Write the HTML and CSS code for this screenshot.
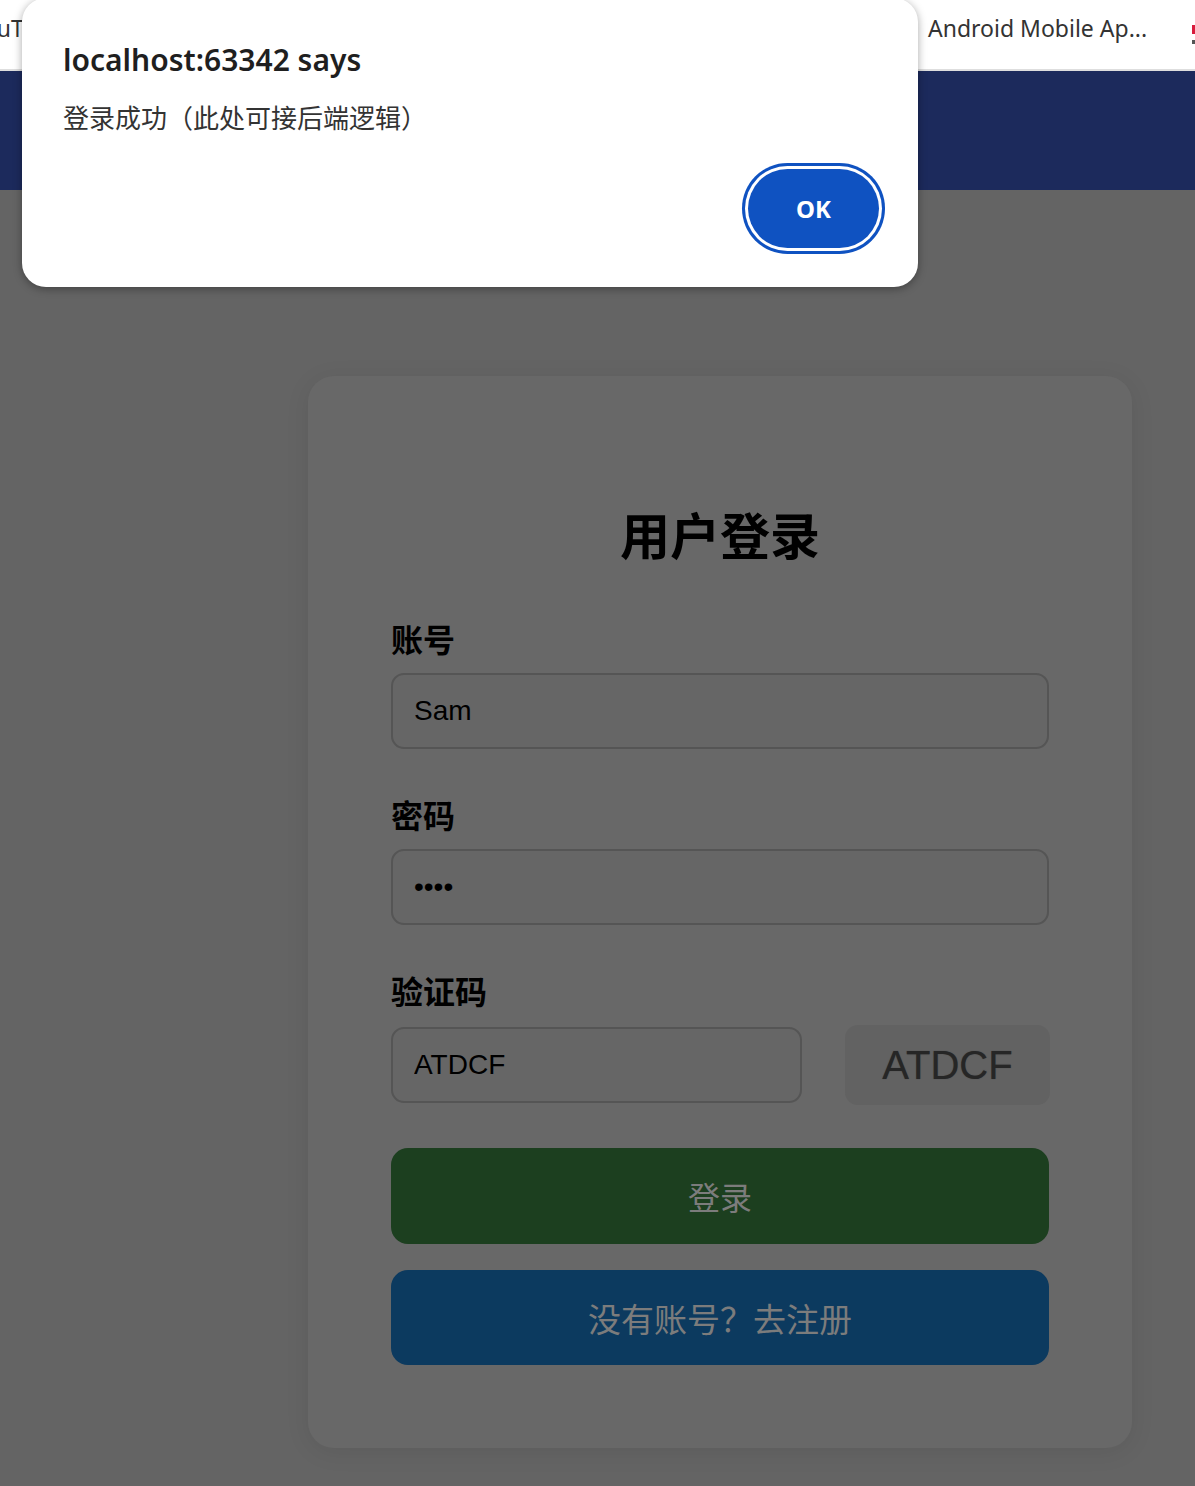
FILE: index.html
```html
<!DOCTYPE html>
<html lang="zh-CN">
<head>
<meta charset="utf-8">
<title>用户登录</title>
<link rel="stylesheet" href="styles.css">
</head>
<body>
<div class="bookmarks">
  <span class="bm bm-first"><span class="bm-first-text">YouTube</span></span>
  <span class="bm bm-android">Android Mobile Ap...</span>
  <span class="bm-fav"><span class="fav-red"></span><span class="fav-dark"></span></span>
</div>
<header class="topband"></header>
<main class="page">
  <form class="card">
    <h1 class="title">用户登录</h1>
    <div class="field">
      <label class="label">账号</label>
      <input class="input" type="text" value="Sam">
    </div>
    <div class="field">
      <label class="label">密码</label>
      <input class="input" type="password" value="1234">
    </div>
    <div class="field field-last">
      <label class="label">验证码</label>
      <div class="captcha-row">
        <input class="input captcha-input" type="text" value="ATDCF">
        <div class="captcha-box">ATDCF</div>
      </div>
    </div>
    <button type="button" class="btn btn-login">登录</button>
    <button type="button" class="btn btn-register">没有账号？去注册</button>
  </form>
</main>
<div class="dialog">
  <div class="dialog-title">localhost:63342 says</div>
  <div class="dialog-msg">登录成功（此处可接后端逻辑）</div>
  <div class="dialog-actions">
    <button type="button" class="ok">OK</button>
  </div>
</div>
</body>
</html>
```
FILE: styles.css
```css
* { box-sizing: border-box; }
html, body { margin: 0; padding: 0; }
body {
  background: #646464;
  font-family: "Liberation Sans", "Noto Sans CJK SC", sans-serif;
  width: 1195px;
  height: 1486px;
  overflow: hidden;
  position: relative;
}

/* bookmark bar */
.bookmarks {
  height: 71px;
  background: #ffffff;
  border-bottom: 2px solid #dedede;
  display: flex;
  align-items: flex-start;
  padding-top: 12px;
  font-family: "Noto Sans", "Open Sans", sans-serif;
  font-size: 23px;
  color: #333333;
  white-space: nowrap;
}
.bm-first {
  flex: 0 0 22px;
  overflow: hidden;
}
.bm-first-text { display: inline-block; margin-left: -29px; }
.bm-android { margin-left: 906px; }
.bm-fav {
  margin-left: auto;
  margin-right: 0;
  display: flex;
  flex-direction: column;
  gap: 6px;
  padding-top: 13px;
}
.fav-red { width: 3px; height: 9px; background: #d81b3c; display: block; }
.fav-dark { width: 3px; height: 4px; background: #555; display: block; }

.topband {
  height: 119px;
  background: #1c2a5c;
}

.page {
  padding: 186px 0 0 308px;
}

.card {
  width: 824px;
  background: #686868;
  border-radius: 26px;
  padding: 127px 83px 83px;
  box-shadow: 0 4px 24px rgba(0, 0, 0, 0.08);
  display: flex;
  flex-direction: column;
}

.title {
  margin: 0 0 55px;
  font-family: "Noto Sans CJK SC", sans-serif;
  font-size: 50px;
  line-height: 60px;
  font-weight: 700;
  text-align: center;
  color: #000;
}

.field { display: flex; flex-direction: column; margin-bottom: 45px; }
.field-last { margin-bottom: 43px; }

.label {
  font-family: "Noto Sans CJK SC", sans-serif;
  font-size: 32px;
  line-height: 40px;
  font-weight: 700;
  color: #000;
  margin-bottom: 15px;
}

.input {
  height: 76px;
  width: 100%;
  border: 2px solid #555555;
  border-radius: 13px;
  background: #666666;
  padding: 0 21px;
  font-family: "Liberation Sans", sans-serif;
  font-size: 28px;
  color: #000;
  outline: none;
}

.captcha-row {
  display: flex;
  align-items: center;
  justify-content: space-between;
  height: 80px;
}
.captcha-input { width: 411px; }
.captcha-box {
  width: 205px;
  height: 80px;
  border-radius: 13px;
  background: #626262;
  display: flex;
  align-items: center;
  justify-content: center;
  font-family: "Liberation Sans", sans-serif;
  font-size: 40px;
  color: #262626;
  margin-right: -1px;
  text-shadow: 0 0 1px rgba(0, 0, 0, 0.4);
}

.btn {
  height: 96px;
  width: 100%;
  border: none;
  border-radius: 17px;
  font-family: "Noto Sans CJK SC", sans-serif;
  font-size: 32px;
  color: #7c7c7c;
  cursor: pointer;
  padding: 0;
}
.btn-login { background: #1c3f1f; margin-bottom: 26px; }
.btn-register { background: #0c3a5f; height: 95px; font-size: 33px; }

/* alert dialog overlay */
.dialog {
  position: absolute;
  left: 22px;
  top: -2px;
  width: 896px;
  height: 289px;
  background: #ffffff;
  border-radius: 24px;
  box-shadow: 0 2px 8px rgba(0, 0, 0, 0.35);
  padding: 40px 33px 0 41px;
}
.dialog-title {
  font-family: "Noto Sans", "Open Sans", sans-serif;
  font-weight: 600;
  font-size: 30px;
  line-height: 44px;
  color: #1f1f1f;
}
.dialog-msg {
  margin-top: 17px;
  font-family: "Noto Sans CJK SC", sans-serif;
  font-size: 26px;
  line-height: 36px;
  color: #333;
}
.dialog-actions {
  display: flex;
  justify-content: flex-end;
  margin-top: 34px;
}
.ok {
  width: 131px;
  height: 79px;
  border-radius: 40px;
  border: none;
  background: #0f52c1;
  color: #fff;
  font-family: "Noto Sans", "Open Sans", sans-serif;
  font-weight: 700;
  font-size: 24px;
  box-shadow: 0 0 0 3px #ffffff, 0 0 0 6px #0f52c1;
  margin-right: 6px;
  padding: 0;
}
```
